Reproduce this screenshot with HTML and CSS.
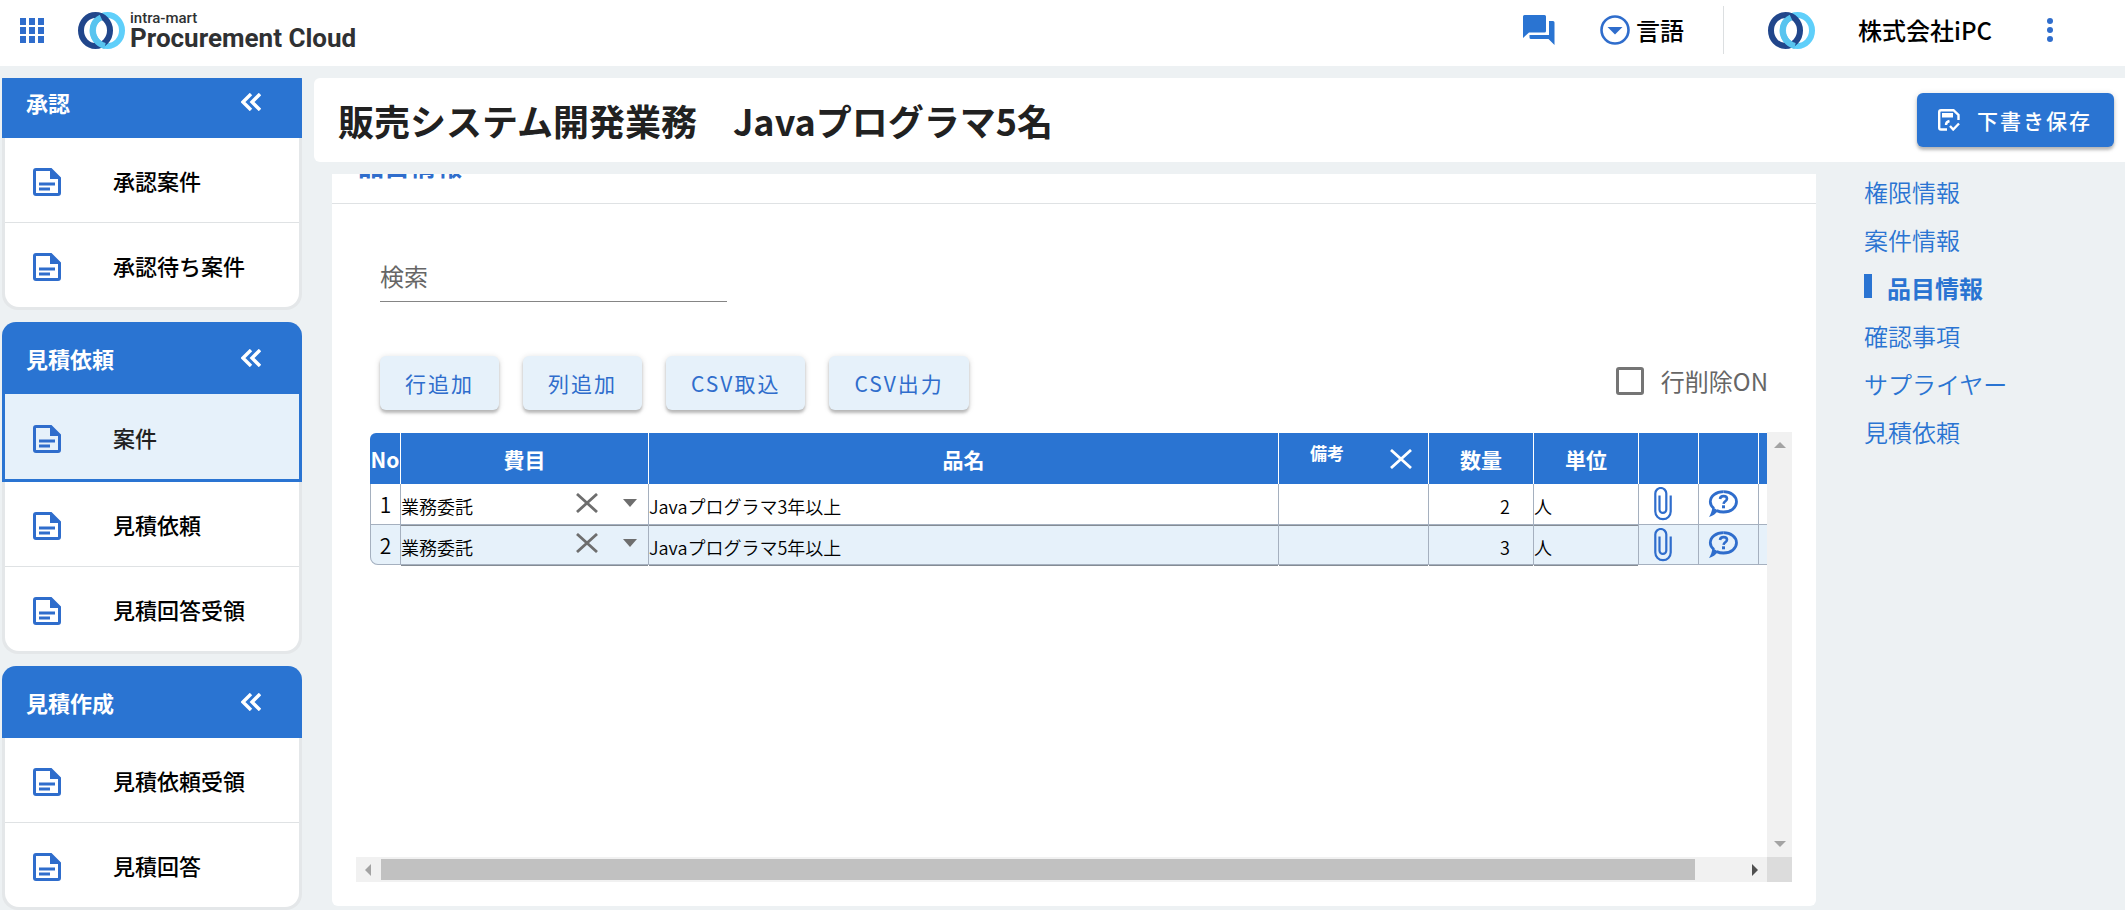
FILE: index.html
```html
<!DOCTYPE html>
<html lang="ja">
<head>
<meta charset="utf-8">
<title>Procurement Cloud</title>
<link rel="stylesheet" href="styles.css">
</head>
<body>
<svg class="defs" aria-hidden="true">
  <symbol id="doc" viewBox="0 0 28 28"><path fill="currentColor" fill-rule="evenodd" d="M3 0H18.500L28 9.500V25a3 3 0 0 1-3 3H3a3 3 0 0 1-3-3V3a3 3 0 0 1 3-3zM3 3V25H25V11H17V3zM6 14.500H22V17.500H6zM6 19.500H17V22.500H6z"/></symbol>
  <symbol id="chev" viewBox="0 0 20 18"><path fill="none" stroke="currentColor" stroke-width="3.400" d="M10 1L2 9l8 8M19 1l-8 8 8 8"/></symbol>
  <symbol id="rings" viewBox="0 0 47 37"><ellipse cx="29.500" cy="18.500" rx="14.500" ry="15.500" fill="none" stroke="#5fcffa" stroke-width="6"/><ellipse cx="17.500" cy="18.500" rx="14.500" ry="15.500" fill="none" stroke="#21468b" stroke-width="6"/><path fill="none" stroke="#58c4ef" stroke-width="6" d="M23 5.500C17.500 8 14.500 13 14.500 18.500S18.500 32 27 34"/></symbol>
  <symbol id="x" viewBox="0 0 22 20"><path fill="none" stroke="currentColor" stroke-width="2.800" d="M1 1l20 18M21 1L1 19"/></symbol>
  <symbol id="clip" viewBox="0 0 18 34"><path fill="none" stroke="currentColor" stroke-width="2.200" d="M5.500 8.500V22.500a3.400 3.400 0 0 0 6.800 0V6.500a5.500 5.500 0 0 0-11 0V24.500a7.700 7.700 0 0 0 15.400 0V8.500"/></symbol>
  <symbol id="help" viewBox="0 0 30 28"><path fill="none" stroke="currentColor" stroke-width="2.800" d="M15.500 1.600c7.500 0 13 4.500 13 10.200s-5.500 10.200-13 10.200c-2.500 0-4.800-.5-6.800-1.400"/><path fill="none" stroke="currentColor" stroke-width="2.800" d="M6 18.500c-2.300-1.800-3.700-4.100-3.700-6.700 0-5.700 5.700-10.200 13.200-10.200"/><path fill="currentColor" d="M4.500 17l5.500 3.500c-2 3.500-5.500 5.500-9 6.500 1.800-2.800 3-6 3.500-10z"/><path fill="none" stroke="currentColor" stroke-width="2.600" d="M12 9c.2-1.900 1.500-2.900 3.500-2.900 2.100 0 3.500 1 3.500 2.700 0 2.400-3.200 2.600-3.400 5"/><path fill="currentColor" d="M14 15.300h3v3h-3z"/></symbol>
</svg>
<header class="top">
  <button class="plain apps" aria-label="アプリ"><svg width="24" height="25" viewBox="0 0 24 25" fill="#2f6dcc"><path d="M0 0h6v7H0zM9 0h6v7H9zM18 0h6v7h-6zM0 9h6v7H0zM9 9h6v7H9zM18 9h6v7h-6zM0 18h6v7H0zM9 18h6v7H9zM18 18h6v7h-6z"/></svg></button>
  <a href="#" class="brand"><svg width="47" height="37"><use href="#rings"/></svg><span class="brand-text"><span class="brand-sub">intra-mart</span><span class="brand-main">Procurement Cloud</span></span></a>
  <button class="plain chat" aria-label="チャット"><svg width="32" height="30" viewBox="0 0 32 30" fill="#2a74d2"><path d="M1.500 0H21.500a1.500 1.500 0 0 1 1.500 1.500V16a1.500 1.500 0 0 1-1.500 1.500H6L0 23V1.500A1.500 1.500 0 0 1 1.500 0zM26 6h4a1.500 1.500 0 0 1 1.500 1.500V30L25.500 24H8a1.500 1.500 0 0 1-1.500-1.500V20H26z"/></svg></button>
  <button class="plain lang"><svg width="30" height="30" viewBox="0 0 30 30"><circle cx="15" cy="15" r="13.500" fill="none" stroke="#2f6dcc" stroke-width="2.600"/><path fill="#2f6dcc" d="M7.500 12h15L15 19.500z"/></svg><span>言語</span></button>
  <span class="rule"></span>
  <a href="#" class="company"><svg width="47" height="37"><use href="#rings"/></svg><span>株式会社iPC</span></a>
  <button class="plain more" aria-label="メニュー"><svg width="6" height="24" viewBox="0 0 6 24" fill="#2f6dcc"><circle cx="3" cy="3" r="3"/><circle cx="3" cy="12" r="3"/><circle cx="3" cy="21" r="3"/></svg></button>
</header>
<div class="shell">
  <nav class="side">
    <section class="group cut">
      <h2>承認<button class="plain" aria-label="折りたたむ"><svg width="20" height="18"><use href="#chev"/></svg></button></h2>
      <ul>
        <li><a href="#"><svg width="28" height="28"><use href="#doc"/></svg>承認案件</a></li>
        <li><a href="#"><svg width="28" height="28"><use href="#doc"/></svg>承認待ち案件</a></li>
      </ul>
    </section>
    <section class="group">
      <h2>見積依頼<button class="plain" aria-label="折りたたむ"><svg width="20" height="18"><use href="#chev"/></svg></button></h2>
      <ul>
        <li class="on"><a href="#"><svg width="28" height="28"><use href="#doc"/></svg>案件</a></li>
        <li><a href="#"><svg width="28" height="28"><use href="#doc"/></svg>見積依頼</a></li>
        <li><a href="#"><svg width="28" height="28"><use href="#doc"/></svg>見積回答受領</a></li>
      </ul>
    </section>
    <section class="group">
      <h2>見積作成<button class="plain" aria-label="折りたたむ"><svg width="20" height="18"><use href="#chev"/></svg></button></h2>
      <ul>
        <li><a href="#"><svg width="28" height="28"><use href="#doc"/></svg>見積依頼受領</a></li>
        <li><a href="#"><svg width="28" height="28"><use href="#doc"/></svg>見積回答</a></li>
      </ul>
    </section>
  </nav>
  <main class="main">
    <div class="titlebar">
      <h1>販売システム開発業務　Javaプログラマ5名</h1>
      <button class="save"><svg width="22" height="22" viewBox="0 0 22 22" fill="none" stroke="#fff"><path stroke-width="2.400" d="M9 20.500H3a1.800 1.800 0 0 1-1.800-1.800V3A1.800 1.800 0 0 1 3 1.200H15.500L20.500 6v5M8 16c0-2 1.500-3.500 3.500-4"/><path fill="#fff" stroke="none" d="M4 4h11v4.500H4z"/><path stroke-width="2.400" d="M12 17l3.200 3.500L21 14.500"/></svg>下書き保存</button>
    </div>
    <div class="columns">
      <section class="card">
        <div class="card-head"><h2>品目情報</h2></div>
        <div class="tools">
          <input class="search" type="text" placeholder="検索" aria-label="検索">
          <div class="actions">
            <button>行追加</button><button>列追加</button><button>CSV取込</button><button>CSV出力</button>
            <label class="check"><input type="checkbox">行削除ON</label>
          </div>
        </div>
        <div class="grid">
          <div class="view">
            <table>
              <colgroup><col class="c-no"><col class="c-cost"><col class="c-name"><col class="c-note"><col class="c-qty"><col class="c-qty"><col class="c-icon"><col class="c-icon"><col class="c-end"></colgroup>
              <thead><tr><th>No</th><th>費目</th><th>品名</th><th><div class="note"><span>備考</span><button class="plain" aria-label="列を削除"><svg width="22" height="20"><use href="#x"/></svg></button></div></th><th>数量</th><th>単位</th><th></th><th></th><th></th></tr></thead>
              <tbody>
                <tr><td class="no">1</td><td class="field"><div class="cost"><span>業務委託</span><button class="plain" aria-label="クリア"><svg width="22" height="20"><use href="#x"/></svg></button><button class="plain" aria-label="選択"><svg width="14" height="8" viewBox="0 0 14 8"><path fill="currentColor" d="M0 0h14L7 8z"/></svg></button></div></td><td class="field">Javaプログラマ3年以上</td><td class="field"></td><td class="field num">2</td><td class="field">人</td><td class="icon clip"><button class="plain" aria-label="添付"><svg width="18" height="34"><use href="#clip"/></svg></button></td><td class="icon"><button class="plain" aria-label="質問"><svg width="30" height="28"><use href="#help"/></svg></button></td><td></td></tr>
                <tr><td class="no">2</td><td class="field"><div class="cost"><span>業務委託</span><button class="plain" aria-label="クリア"><svg width="22" height="20"><use href="#x"/></svg></button><button class="plain" aria-label="選択"><svg width="14" height="8" viewBox="0 0 14 8"><path fill="currentColor" d="M0 0h14L7 8z"/></svg></button></div></td><td class="field">Javaプログラマ5年以上</td><td class="field"></td><td class="field num">3</td><td class="field">人</td><td class="icon clip"><button class="plain" aria-label="添付"><svg width="18" height="34"><use href="#clip"/></svg></button></td><td class="icon"><button class="plain" aria-label="質問"><svg width="30" height="28"><use href="#help"/></svg></button></td><td></td></tr>
              </tbody>
            </table>
          </div>
          <div class="vbar"><svg width="12" height="6" viewBox="0 0 12 6"><path fill="#a3a3a3" d="M0 6h12L6 0z"/></svg><svg width="12" height="6" viewBox="0 0 12 6"><path fill="#a3a3a3" d="M0 0h12L6 6z"/></svg></div>
          <div class="hbar"><svg width="6" height="12" viewBox="0 0 6 12"><path fill="#a3a3a3" d="M6 0v12L0 6z"/></svg><span class="track"><span class="thumb"></span></span><svg width="6" height="12" viewBox="0 0 6 12"><path fill="#505050" d="M0 0v12l6-6z"/></svg></div>
          <div class="corner"></div>
        </div>
      </section>
      <nav class="toc">
        <a href="#">権限情報</a><a href="#">案件情報</a><a href="#" class="on">品目情報</a><a href="#">確認事項</a><a href="#">サプライヤー</a><a href="#">見積依頼</a>
      </nav>
    </div>
  </main>
</div>
</body>
</html>
```
FILE: styles.css
```css
* { box-sizing: border-box; }
body {
  margin: 0;
  height: 100vh;
  display: flex;
  flex-direction: column;
  overflow: hidden;
  background: #edf1f3;
  color: #212121;
  font-family: "Noto Sans CJK JP", sans-serif;
}
h1, h2, ul { margin: 0; padding: 0; }
ul { list-style: none; }
svg { display: block; flex: none; }
a { text-decoration: none; color: inherit; }
button { font-family: inherit; cursor: pointer; }
.defs { position: absolute; width: 0; height: 0; }
.plain { display: flex; align-items: center; padding: 0; border: 0; background: none; color: inherit; }

.top {
  flex: none;
  display: flex;
  align-items: center;
  height: 66px;
  padding: 0 72px 6px 20px;
  background: #fff;
  color: #000;
  font-size: 24px;
  font-weight: 500;
}
.brand { display: flex; align-items: center; gap: 5px; margin-left: 34px; color: #2f3133; font-family: Roboto, sans-serif; }
.brand-text { display: flex; flex-direction: column; }
.brand-sub { font-size: 15px; line-height: 16px; }
.brand-main { font-size: 26px; font-weight: 700; line-height: 24px; }
.chat { margin-left: auto; }
.lang { gap: 6px; margin-left: 45px; font-size: 24px; font-weight: 500; line-height: 36px; }
.rule { width: 1px; height: 48px; margin: 0 44px 0 39px; background: #dcdfe1; }
.company { display: flex; align-items: center; gap: 43px; line-height: 36px; }
.more { margin-left: 55px; }

.shell { flex: 1; min-height: 0; display: flex; gap: 12px; padding-top: 12px; }
.side { flex: none; width: 302px; padding-left: 2px; overflow: hidden; display: flex; flex-direction: column; gap: 12px; }
.group { flex: none; border-radius: 14px 14px 16px 16px; background: #e4e7e9; }
.cut { margin-top: -12px; }
.group h2 {
  display: flex;
  align-items: center;
  justify-content: space-between;
  height: 72px;
  padding: 0 41px 0 24px;
  border-radius: 14px 14px 0 0;
  background: #2a74d2;
  color: #fff;
  font-size: 22px;
  line-height: 32px;
}
.group ul { padding-bottom: 3px; }
.group li { height: 85px; margin: 0 3px; background: #fff; }
.group li:not(:last-child) { border-bottom: 1px solid #dfe2e4; }
.group li:last-child { border-radius: 0 0 14px 14px; height: 84px; }
.group li a { display: flex; align-items: center; gap: 52px; height: 100%; padding: 0 0 0 28px; font-size: 22px; font-weight: 500; color: #000; }
.group li svg { margin-top: 4px; color: #2f6dcc; }
.group .on:not(:last-child) { height: 88px; margin: 0; padding: 0 3px; border-bottom: 3px solid #2a74d2; background: #2a74d2; }
.group .on a { background: #e6f1fa; color: #212121; }

.main { flex: 1; min-width: 0; display: flex; flex-direction: column; gap: 12px; }
.titlebar {
  flex: none;
  display: flex;
  align-items: center;
  justify-content: space-between;
  height: 84px;
  padding: 0 11px 0 24px;
  border-radius: 6px 0 0 6px;
  background: #fff;
}
h1 { font-size: 36px; font-weight: 700; line-height: 54px; }
.save, .actions button {
  height: 54px;
  border: 0;
  border-radius: 6px;
  box-shadow: 0 3px 3px rgba(0, 0, 0, .22), 0 1px 6px rgba(0, 0, 0, .14);
  font-size: 21px;
  letter-spacing: 2px;
}
.save { display: flex; align-items: center; gap: 17px; padding: 0 22px 0 21px; background: #2a74d2; color: #fff; font-weight: 500; }
.columns { flex: 1; min-height: 0; display: flex; padding: 0 0 4px 18px; }
.card { flex: 1; min-width: 0; display: flex; flex-direction: column; overflow: hidden; border-radius: 0 0 6px 6px; background: #fff; }
.card-head { flex: none; display: flex; align-items: flex-end; height: 30px; padding: 0 26px 22px; border-bottom: 1px solid #dfe2e4; }
.card-head h2 { color: #2f6dcc; font-size: 26px; font-weight: 700; line-height: 32px; }
.tools { flex: none; padding: 50px 48px 0 48px; }
.search { display: block; width: 347px; height: 48px; padding: 0 0 5px; border: 0; border-bottom: 1px solid #858585; outline: 0; background: none; color: #666; font: 24px "Noto Sans CJK JP", sans-serif; }
.search::placeholder { color: #666; opacity: 1; }
.actions { display: flex; gap: 24px; margin-top: 54px; }
.actions button { padding: 0 25px; background: #e6f1fa; color: #2f6dcc; }
.check { display: flex; align-items: center; gap: 17px; height: 50px; margin-left: auto; color: #666; font-size: 24px; line-height: 36px; }
.check input { appearance: none; width: 28px; height: 28px; margin: 0; border: 3px solid #757575; border-radius: 3px; }

.grid { flex: 1; min-height: 0; display: grid; grid-template: 1fr 25px / 1fr 25px; margin: 22px 24px 24px; }
.view { overflow: hidden; padding: 1px 0 0 14px; }
.vbar { display: flex; flex-direction: column; align-items: center; justify-content: space-between; padding: 10px 0; background: #f1f1f1; }
.hbar { display: flex; align-items: center; padding: 2px 9px; background: #f1f1f1; }
.track { flex: 1; height: 21px; margin: 0 10px; }
.thumb { display: block; width: calc(100% - 47px); height: 100%; background: #c1c1c1; }
.corner { background: #dcdcdc; }

table { width: 100%; table-layout: fixed; border-spacing: 0; }
.c-no { width: 31px; }
.c-cost { width: 248px; }
.c-note { width: 150px; }
.c-qty { width: 105px; }
.c-icon { width: 60px; }
.c-end { width: 8px; }
th, td { padding: 0; }
th { height: 51px; border-right: 1px solid #fff; background: #2a74d2; color: #fff; font-size: 21px; font-weight: 700; line-height: 30px; }
th:first-child { border-radius: 6px 0 0; }
th:last-child, td:last-child { border-right: 0; }
td { position: relative; height: 40px; border-right: 1px solid #a5b0bf; border-bottom: 1px solid #a5b0bf; color: #000; font-size: 18px; font-weight: 350; line-height: 26px; }
tbody tr:first-child td { height: 41px; }
tbody tr:nth-child(2) { background: #e6f1fa; }
.no { border-left: 1px solid #a5b0bf; text-align: center; font-size: 21px; }
tbody tr:last-child .no { border-radius: 0 0 0 8px; }
.field { padding: 4px 0 0; }
.field::after { content: ""; position: absolute; left: 0; right: 0; bottom: -2px; height: 1px; background: #858c94; }
.num { padding-right: 23px; text-align: right; }
.cost { display: flex; align-items: center; }
.cost span { flex: 1; }
.cost button { height: 20px; margin: -7px 11px 0 14px; color: #6e6e6e; }
.note { display: flex; align-items: center; justify-content: space-between; padding: 0 16px 0 31px; }
.note span { margin-bottom: 12px; font-size: 17px; line-height: 24px; }
.icon button { margin-left: 9px; color: #2f6dcc; }
.clip button { margin-left: 15px; }

.toc { flex: none; display: flex; flex-direction: column; width: 309px; padding-left: 48px; color: #2a74d2; font-size: 24px; font-weight: 350; line-height: 36px; }
.toc a { height: 48px; }
.toc .on { display: flex; gap: 15px; font-weight: 700; }
.toc .on::before { content: ""; width: 8px; height: 24px; margin-top: 4px; background: #2a74d2; }
```
